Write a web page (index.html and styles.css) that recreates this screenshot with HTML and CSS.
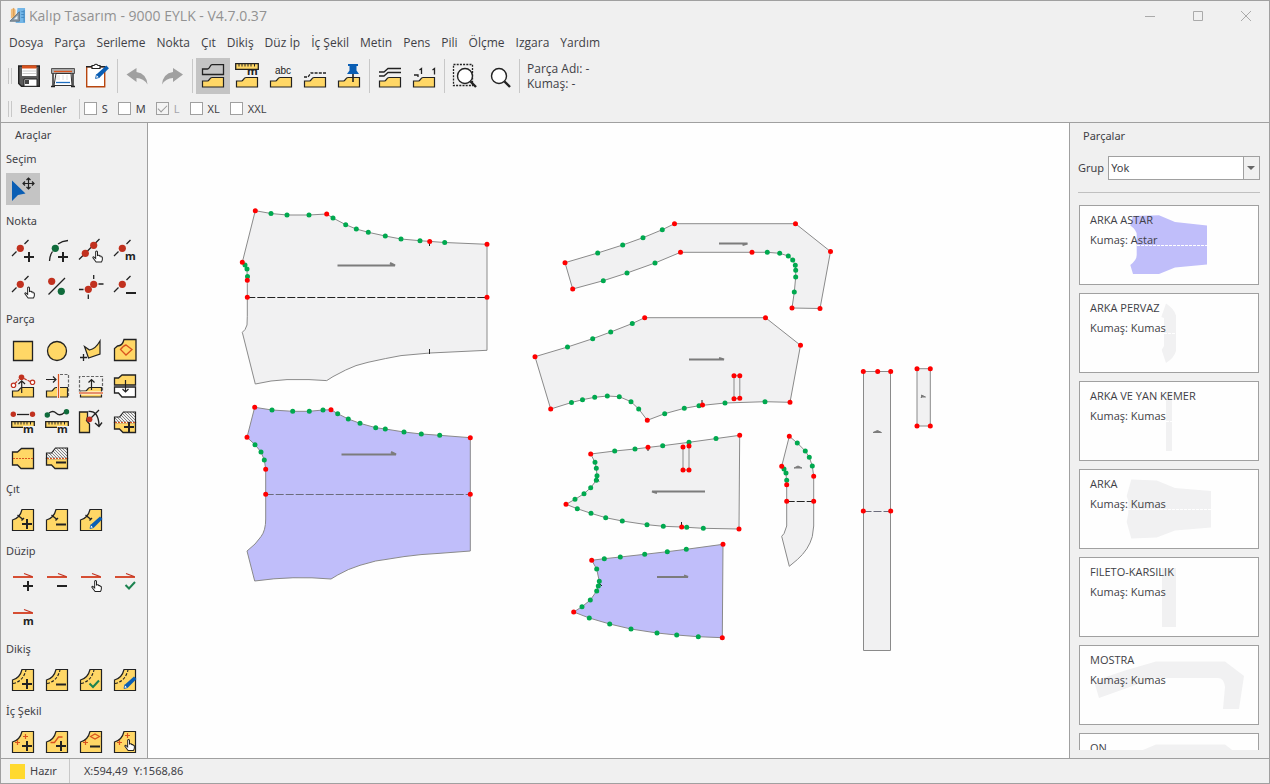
FILE: index.html
```html
<!DOCTYPE html>
<html lang="tr">
<head>
<meta charset="utf-8">
<title>Kalıp Tasarım - 9000 EYLK - V4.7.0.37</title>
<link rel="stylesheet" href="styles.css">
</head>
<body>
<svg class="defs" aria-hidden="true">
  <defs>
    <pattern id="hatch" width="3" height="3" patternUnits="userSpaceOnUse"><path d="M0 0L3 3" stroke="#777" stroke-width=".9"/></pattern>
    <symbol id="plus" viewBox="0 0 12 12"><path d="M1 6h10M6 1v10" stroke="#222" stroke-width="2"/></symbol>
    <symbol id="hand" viewBox="0 0 12 14"><path d="M4 9V2.200q0-1.200 1-1.200t1 1.200V6q2-.8 2.400.5Q10 6 10 7.400q1.300-.2 1.300 1V10q0 1.500-1 3H4.500L1 8.500q-.3-1.300 1-1.100z" fill="#fff" stroke="#222" stroke-width="1.100"/></symbol>
    <symbol id="linedot" viewBox="0 0 34 32"><path d="M6 21l4.500-4.500M18.500 9l4-4" stroke="#222" stroke-width="1.300"/><circle cx="14.300" cy="13.300" r="3.600" fill="#c1311f"/></symbol>
    <symbol id="ruler" viewBox="0 0 24 7"><path d="M.7.7h22.600v5.600H.7z" fill="#ffd766" stroke="#222" stroke-width="1.300"/><path d="M4 1v2.500M7 1v2.500M10 1v2.500M13 1v2.500M16 1v2.500M19.500 1v2.500" stroke="#222"/></symbol>
    <symbol id="half" viewBox="0 0 24 12"><path d="M1.500 11V5h5C8.500 5 8.500 1.500 11 1.500h11.500V11z" fill="#ffd766" stroke="#222" stroke-width="1.200"/></symbol>
    <symbol id="piece" viewBox="0 0 34 32"><path d="M6.500 27.500V17q7.500-2 9.500-10.500h11.500v21z" fill="#ffd766" stroke="#222" stroke-width="1.200"/></symbol>
    <symbol id="notch" viewBox="0 0 34 32"><use href="#piece"/><path d="M11.500 12l5.500 4.500M15.500 17.500l2.500-2.500" stroke="#222" stroke-width="1.400"/></symbol>
    <symbol id="seam" viewBox="0 0 34 32"><use href="#piece"/><path d="M7 20.500q10-2 13-13.500" fill="none" stroke="#222" stroke-width="1.100" stroke-dasharray="3 1.500"/></symbol>
    <symbol id="pencil" viewBox="0 0 14 14"><path d="M1 13l1-4 9-8 2.500 2.500L5 12z" fill="#0a5eb4"/><path d="M1 13l.8-3.600 2.800 2.700z" fill="#fff" stroke="#0a5eb4" stroke-width=".8"/></symbol>
    <symbol id="grain" viewBox="0 0 34 32"><path d="M7 12h20" stroke="#d33b1e" stroke-width="1.800"/><path d="M18 8.500l8 3" stroke="#c1311f" stroke-width="1.200"/></symbol>
    <symbol id="fold" viewBox="0 0 34 32"><path d="M6.500 17.500V12h5l4-5h12v10.500z" fill="url(#hatch)" stroke="#222" stroke-width="1.200"/><path d="M6.500 17.500V24h5l3.500 3.500h12.500v-10z" fill="#ffd766" stroke="#222" stroke-width="1.300"/><path d="M7 17.500h20" stroke="#fff" stroke-width="1.400"/><path d="M7 17.500h20" stroke="#d9531e" stroke-width="1.200" stroke-dasharray="2 1"/></symbol>
  </defs>
</svg>

<div class="window">
  <header class="titlebar">
    <svg class="logo" viewBox="0 0 18 18" aria-hidden="true"><path d="M9 1h8v16H7z" fill="#74b7e8"/><path d="M16 3v13M13 5h3M13 8h3M13 11h3" stroke="#3e83bd"/><path d="M2 3q2-3 5 0v9H2z" fill="#f2bd79"/><path d="M1 15l10-10v10z" fill="#8997a3" stroke="#617382"/><path d="M5 13l4-4v4z" fill="#e1edf6"/><path d="M5 1v9" stroke="#d89848"/></svg>
    <h1 class="title">Kalıp Tasarım - 9000 EYLK - V4.7.0.37</h1>
    <div class="controls">
      <button aria-label="Simge durumuna küçült"><svg viewBox="0 0 12 12"><path d="M1 6.500h10"/></svg></button>
      <button aria-label="Ekranı kapla"><svg viewBox="0 0 12 12"><path d="M1.500 1.500h9v9h-9z"/></svg></button>
      <button aria-label="Kapat"><svg viewBox="0 0 12 12"><path d="M1 1l10 10M11 1L1 11"/></svg></button>
    </div>
  </header>

  <nav class="menu">
    <a href="#">Dosya</a><a href="#">Parça</a><a href="#">Serileme</a><a href="#">Nokta</a><a href="#">Çıt</a><a href="#">Dikiş</a><a href="#">Düz İp</a><a href="#">İç Şekil</a><a href="#">Metin</a><a href="#">Pens</a><a href="#">Pili</a><a href="#">Ölçme</a><a href="#">Izgara</a><a href="#">Yardım</a>
  </nav>

  <div class="toolbar">
    <span class="grip"></span>
    <button class="tb" aria-label="Kaydet"><svg viewBox="0 0 34 36"><path d="M6.700 8h20.600v20.300H9.500l-2.800-2.800z" fill="#5b5b5b" stroke="#222" stroke-width="1.400"/><path d="M10 10h14.500v8H10z" fill="#fff"/><path d="M10 7.300h14.500v3.200H10z" fill="#d9531e"/><path d="M10.500 13h13.500M10.500 15.500h13.500" stroke="#ccc"/><path d="M12 21h13v7.300H12z" fill="#fff" stroke="#222"/><path d="M13 22h4v4h-4z" fill="#444"/></svg></button>
    <button class="tb" aria-label="Çizdir"><svg viewBox="0 0 34 36"><path d="M5.500 10.500h23v5h-23z" fill="#aaa" stroke="#555"/><path d="M8 13.500h18" stroke="#d9531e" stroke-width="1.300"/><path d="M7 15.500V28M27 15.500V28" stroke="#222" stroke-width="1.400"/><path d="M5 28.500h4M25 28.500h4" stroke="#222" stroke-width="1.400"/><path d="M10 15.500h15l1 12H8z" fill="#fff" stroke="#333"/><path d="M11 17v5M13 17v5M17 17v5M21 17v5" stroke="#ddd"/><path d="M10 24.500h14" stroke="#1f6fc0" stroke-width="1.300"/></svg></button>
    <button class="tb" aria-label="Düzenle"><svg viewBox="0 0 34 36"><path d="M6.700 8.700h18v20h-18z" fill="#fff" stroke="#b8460f" stroke-width="1.400"/><path d="M6 8.700h19.500" stroke="#222" stroke-width="1.400"/><path d="M12 7.500h2q2-2.500 4 0h2v3h-8z" fill="#fff" stroke="#222" stroke-width="1.200"/><use href="#pencil" x="14.500" y="6.500" width="15" height="15"/></svg></button>
    <span class="sep"></span>
    <button class="tb" aria-label="Geri al"><svg viewBox="0 0 34 36"><path d="M5.500 16.500l10-6.500v4q10 1.500 11 12.500-4-6.500-11-6.500v4z" fill="#a0a0a0"/></svg></button>
    <button class="tb" aria-label="Yinele"><svg viewBox="0 0 34 36"><path d="M28 16.500L18 10v4Q8 15.500 7 26.500 11 20 18 20v4z" fill="#a0a0a0"/></svg></button>
    <span class="sep"></span>
    <button class="tb on" aria-label="Parça" aria-pressed="true"><svg viewBox="0 0 34 36"><path d="M6.500 16.500V11h5c2.500 0 2-4 4.500-4.300h11.500v9.800z" fill="none" stroke="#222" stroke-width="1.300"/><use href="#half" x="5" y="18" width="24" height="12"/></svg></button>
    <button class="tb" aria-label="Ölçüler"><svg viewBox="0 0 34 36"><use href="#ruler" x="5" y="5" width="24" height="7"/><text x="17" y="17" class="glyph">m</text><use href="#half" x="5" y="18" width="24" height="12"/></svg></button>
    <button class="tb" aria-label="Metinler"><svg viewBox="0 0 34 36"><text x="11" y="16" class="abc">abc</text><use href="#half" x="5" y="18" width="24" height="12"/></svg></button>
    <button class="tb" aria-label="Dikiş payı"><svg viewBox="0 0 34 36"><path d="M6 19h4l3-4h15" fill="none" stroke="#222" stroke-width="1.300" stroke-dasharray="3 1.200"/><use href="#half" x="5" y="18" width="24" height="12"/></svg></button>
    <button class="tb" aria-label="Sabitle"><svg viewBox="0 0 34 36"><use href="#half" x="5" y="18" width="24" height="12"/><path d="M16 6h10v2h-1.500v4.500L27 16H15l2.500-3.500V8H16z" fill="#0a5eb4"/><path d="M21 16v8" stroke="#222" stroke-width="1.600"/></svg></button>
    <span class="sep"></span>
    <button class="tb" aria-label="Katmanlar"><svg viewBox="0 0 34 36"><path d="M6 14h5l4-3.500h13M6 18h5l4-3.500h13" fill="none" stroke="#222" stroke-width="1.300"/><use href="#half" x="5" y="18" width="24" height="12"/></svg></button>
    <button class="tb" aria-label="Çıtlar"><svg viewBox="0 0 34 36"><path d="M12.500 12l2-1.500v5.500M25.500 12l2-1.500v6M7 17h4v2" fill="none" stroke="#222" stroke-width="1.300"/><use href="#half" x="5" y="18" width="24" height="12"/></svg></button>
    <span class="sep"></span>
    <button class="tb" aria-label="Alanı yakınlaştır"><svg viewBox="0 0 34 36"><path d="M5.500 6.500h19v21h-19z" fill="none" stroke="#222" stroke-width="1.300" stroke-dasharray="2 1.200"/><circle cx="17" cy="18" r="7.500" fill="#fff" stroke="#222" stroke-width="1.400"/><path d="M22.500 23.500l5.500 5.500" stroke="#222" stroke-width="2.400"/></svg></button>
    <button class="tb" aria-label="Yakınlaştır"><svg viewBox="0 0 34 36"><circle cx="17" cy="18" r="7.500" fill="#fff" stroke="#222" stroke-width="1.400"/><path d="M22.500 23.500l5.500 5.500" stroke="#222" stroke-width="2.400"/></svg></button>
    <span class="sep"></span>
    <p class="pieceinfo">Parça Adı: -<br>Kumaş: -</p>
  </div>

  <div class="sizes">
    <span class="grip"></span>
    <span class="sizes-title">Bedenler</span>
    <span class="sep"></span>
    <label><input type="checkbox">S</label>
    <label><input type="checkbox">M</label>
    <label class="disabled"><input type="checkbox" checked disabled>L</label>
    <label><input type="checkbox">XL</label>
    <label><input type="checkbox">XXL</label>
  </div>

  <div class="work">
    <aside class="tools">
      <h2 class="panel-title">Araçlar</h2>
      <section><h3>Seçim</h3><div class="grid">
        <button class="on" aria-label="Seç" aria-pressed="true"><svg viewBox="0 0 34 32"><path d="M6 7.500l13.500 13L12 22l-6 6z" fill="#0a5eb4"/><path d="M17 10.500h11M22.500 5v11M19 8.500l-2 2 2 2M26 8.500l2 2-2 2M20.500 7l2-2 2 2M20.500 14l2 2 2-2" fill="none" stroke="#222" stroke-width="1.200"/></svg></button>
      </div></section>
      <section><h3>Nokta</h3><div class="grid">
        <button aria-label="Nokta ekle"><svg viewBox="0 0 34 32"><use href="#linedot"/><use href="#plus" x="17" y="16" width="12" height="12"/></svg></button>
        <button aria-label="Eğri noktası ekle"><svg viewBox="0 0 34 32"><path d="M9.500 26q0-5 3-9.500M18 9q4-3 10-3.500" fill="none" stroke="#222" stroke-width="1.300"/><circle cx="15.300" cy="13.300" r="3.600" fill="#0f6b3b"/><use href="#plus" x="17" y="16" width="12" height="12"/></svg></button>
        <button aria-label="Noktaları taşı"><svg viewBox="0 0 34 32"><path d="M5 24.500L25.500 4" stroke="#222" stroke-width="1.300"/><g fill="#c1311f"><circle cx="11.300" cy="18.300" r="3.600"/><circle cx="19.700" cy="10.300" r="3.600"/></g><use href="#hand" x="18" y="15" width="11" height="13"/></svg></button>
        <button aria-label="Nokta ölçüsü"><svg viewBox="0 0 34 32"><use href="#linedot"/><text x="17" y="25" class="glyph">m</text></svg></button>
        <button aria-label="Nokta taşı"><svg viewBox="0 0 34 32"><use href="#linedot"/><use href="#hand" x="18" y="15" width="11" height="13"/></svg></button>
        <button aria-label="Nokta türü"><svg viewBox="0 0 34 32"><path d="M8.500 23.500L25 7" stroke="#222" stroke-width="1.300"/><circle cx="11.700" cy="10.300" r="3.600" fill="#c1311f"/><circle cx="21.300" cy="20.300" r="3.600" fill="#0f6b3b"/></svg></button>
        <button aria-label="Hizala"><svg viewBox="0 0 34 32"><path d="M19.700 4v4M24.500 13h5M5 18.500h4.500M14.300 23.500V28" stroke="#222" stroke-width="1.300"/><g fill="#c1311f"><circle cx="14.300" cy="18.300" r="3.600"/><circle cx="19.700" cy="13.300" r="3.600"/></g></svg></button>
        <button aria-label="Nokta sil"><svg viewBox="0 0 34 32"><use href="#linedot"/><path d="M18 22h10" stroke="#222" stroke-width="2"/></svg></button>
      </div></section>
      <section><h3>Parça</h3><div class="grid">
        <button aria-label="Dikdörtgen"><svg viewBox="0 0 34 32"><path d="M7.500 8.500h19v19h-19z" fill="#ffd766" stroke="#222" stroke-width="1.300"/></svg></button>
        <button aria-label="Daire"><svg viewBox="0 0 34 32"><circle cx="17" cy="18" r="9.500" fill="#ffd766" stroke="#222" stroke-width="1.300"/></svg></button>
        <button aria-label="Serbest parça"><svg viewBox="0 0 34 32"><path d="M10.500 13.500l5 3.500q6-1 10.500-9v13l-11.500 4z" fill="#ffd766" stroke="#222" stroke-width="1.200"/><path d="M6 24.500h7M9.500 21v7" stroke="#222" stroke-width="1.300"/></svg></button>
        <button aria-label="İçten parça"><svg viewBox="0 0 34 32"><path d="M6.500 27.500v-12l3-2.500q5 0 6.500-6.500h12v21z" fill="#ffd766" stroke="#222" stroke-width="1.300"/><path d="M12.500 16.500q3-4 5.500-4.500l6 4.500-6 5.500z" fill="none" stroke="#d9531e" stroke-width="1.300"/></svg></button>
        <button aria-label="Parça kopar"><svg viewBox="0 0 34 32"><use href="#half" x="5" y="17" width="24" height="12"/><path d="M9 14.500l4-4M18 9.500l6 3" stroke="#c1311f" stroke-width="1.200" stroke-dasharray="3 1"/><path d="M15.700 24V12M12.500 15l3.200-3.200L19 15" fill="none" stroke="#222" stroke-width="1.200"/><circle cx="15.500" cy="8.300" r="2.800" fill="#c1311f"/><g fill="#fff" stroke="#c1311f" stroke-width="1.200"><circle cx="7.500" cy="16.300" r="2.200"/><circle cx="26.500" cy="13.300" r="2.200"/></g></svg></button>
        <button aria-label="Böl"><svg viewBox="0 0 34 32"><use href="#half" x="5" y="17" width="24" height="12"/><path d="M20 5.500h8.500V28" fill="none" stroke="#666" stroke-width="1.200" stroke-dasharray="3 1.500"/><path d="M6 10.500h10M13 7.500l3 3-3 3" fill="none" stroke="#222" stroke-width="1.200"/><path d="M18.500 5v24" stroke="#fff" stroke-width="3"/><path d="M18.500 5v24" stroke="#d9531e" stroke-width="1.400"/></svg></button>
        <button aria-label="Uzat"><svg viewBox="0 0 34 32"><use href="#half" x="5" y="17" width="24" height="12"/><path d="M5.500 23V7.500h23V23" fill="none" stroke="#666" stroke-width="1.200" stroke-dasharray="3 1.500"/><path d="M5 24h24" stroke="#fff" stroke-width="3"/><path d="M5 24h24" stroke="#d9531e" stroke-width="1.300"/><path d="M17.500 21V10.500M14.500 13.500l3-3 3 3" fill="none" stroke="#222" stroke-width="1.200"/></svg></button>
        <button aria-label="Ayır"><svg viewBox="0 0 34 32"><path d="M6.500 16V9h4l3.500-3h13.500v10z" fill="#ffd766" stroke="#222" stroke-width="1.300"/><path d="M6.500 18h21v10H14l-3.500-4h-4z" fill="#fff" stroke="#222" stroke-width="1.300"/><path d="M17.500 11v12M14.500 20l3 3 3-3" fill="none" stroke="#222" stroke-width="1.200"/></svg></button>
        <button aria-label="Düz ölçü"><svg viewBox="0 0 34 32"><path d="M11 9.500h12" stroke="#222" stroke-width="1.300"/><g fill="#c1311f"><circle cx="7.300" cy="9.300" r="2.700"/><circle cx="26.500" cy="9.300" r="2.700"/></g><use href="#ruler" x="5" y="16" width="24" height="7"/><path d="M17 21h12v7H17z" fill="#f0f0f0"/><text x="17" y="28" class="glyph">m</text></svg></button>
        <button aria-label="Eğri ölçü"><svg viewBox="0 0 34 32"><path d="M9 8q4-3 7 0 4 4 9-1" fill="none" stroke="#222" stroke-width="1.300"/><g fill="#0f6b3b"><circle cx="7.300" cy="10" r="2.700"/><circle cx="26.500" cy="6.700" r="2.700"/></g><use href="#ruler" x="5" y="16" width="24" height="7"/><path d="M17 21h12v7H17z" fill="#f0f0f0"/><text x="17" y="28" class="glyph">m</text></svg></button>
        <button aria-label="Döndür"><svg viewBox="0 0 34 32"><path d="M5.500 7h8v4.500l-1 4 3 3.500v8.500h-10z" fill="#ffd766" stroke="#222" stroke-width="1.300"/><path d="M16 14l9-9M14.500 6.500q10-1 10.500 14M21 18l4 3.500 3-4" fill="none" stroke="#222" stroke-width="1.300"/><circle cx="15.500" cy="14.300" r="2.900" fill="#c1311f"/></svg></button>
        <button aria-label="Kat ekle"><svg viewBox="0 0 34 32"><use href="#fold"/><use href="#plus" x="15" y="16" width="12" height="12"/></svg></button>
        <button aria-label="Katı aç"><svg viewBox="0 0 34 32"><path d="M6.500 24V11h5l4-3.500h12v20H15L11.500 24z" fill="#ffd766" stroke="#222" stroke-width="1.300"/><path d="M7 17.500h20" stroke="#d9531e" stroke-width="1.200" stroke-dasharray="2 1"/></svg></button>
        <button aria-label="Kat sil"><svg viewBox="0 0 34 32"><use href="#fold"/><path d="M16 21.500h10" stroke="#222" stroke-width="2"/></svg></button>
      </div></section>
      <section><h3>Çıt</h3><div class="grid">
        <button aria-label="Çıt ekle"><svg viewBox="0 0 34 32"><use href="#notch"/><use href="#plus" x="15" y="15" width="12" height="12"/></svg></button>
        <button aria-label="Çıt sil"><svg viewBox="0 0 34 32"><use href="#notch"/><path d="M16 21.500h10" stroke="#222" stroke-width="2"/></svg></button>
        <button aria-label="Çıt düzenle"><svg viewBox="0 0 34 32"><use href="#notch"/><use href="#pencil" x="15" y="12.500" width="14" height="14"/></svg></button>
      </div></section>
      <section><h3>Düzip</h3><div class="grid">
        <button aria-label="Düz ip ekle"><svg viewBox="0 0 34 32"><use href="#grain"/><use href="#plus" x="16" y="15" width="12" height="12"/></svg></button>
        <button aria-label="Düz ip sil"><svg viewBox="0 0 34 32"><use href="#grain"/><path d="M17 21h10" stroke="#222" stroke-width="2"/></svg></button>
        <button aria-label="Düz ip taşı"><svg viewBox="0 0 34 32"><use href="#grain"/><use href="#hand" x="17" y="14.500" width="11" height="13"/></svg></button>
        <button aria-label="Düz ip onayla"><svg viewBox="0 0 34 32"><use href="#grain"/><path d="M17.500 20l3.500 3.500 6-6.500" fill="none" stroke="#1c8350" stroke-width="2"/></svg></button>
        <button aria-label="Düz ip ölçüsü"><svg viewBox="0 0 34 32"><use href="#grain"/><text x="17" y="24" class="glyph">m</text></svg></button>
      </div></section>
      <section><h3>Dikiş</h3><div class="grid">
        <button aria-label="Dikiş ekle"><svg viewBox="0 0 34 32"><use href="#seam"/><use href="#plus" x="15" y="15" width="12" height="12"/></svg></button>
        <button aria-label="Dikiş sil"><svg viewBox="0 0 34 32"><use href="#seam"/><path d="M16 21.500h10" stroke="#222" stroke-width="2"/></svg></button>
        <button aria-label="Dikiş onayla"><svg viewBox="0 0 34 32"><use href="#seam"/><path d="M15.500 20.500l3.500 3.500 6-6.500" fill="none" stroke="#1c8350" stroke-width="2"/></svg></button>
        <button aria-label="Dikiş düzenle"><svg viewBox="0 0 34 32"><use href="#seam"/><use href="#pencil" x="15" y="12.500" width="14" height="14"/></svg></button>
      </div></section>
      <section><h3>İç Şekil</h3><div class="grid">
        <button aria-label="İç nokta ekle"><svg viewBox="0 0 34 32"><use href="#piece"/><path d="M9 17.500h5M11.500 15v5M17 11.500h5M19.500 9v5" stroke="#d9531e" stroke-width="1.200"/><use href="#plus" x="15" y="15" width="12" height="12"/></svg></button>
        <button aria-label="İç çizgi ekle"><svg viewBox="0 0 34 32"><use href="#piece"/><path d="M10.500 17.500h4l4-5.500h4" fill="none" stroke="#d9531e" stroke-width="1.300"/><use href="#plus" x="15" y="15" width="12" height="12"/></svg></button>
        <button aria-label="İç şekil sil"><svg viewBox="0 0 34 32"><use href="#piece"/><path d="M9 17.500h5M11.500 15v5M16.500 11.500l4.500-2.500 4.500 2.500-4.500 2.500z" fill="none" stroke="#d9531e" stroke-width="1.200"/><path d="M16 21.500h10" stroke="#222" stroke-width="2"/></svg></button>
        <button aria-label="İç şekil taşı"><svg viewBox="0 0 34 32"><use href="#piece"/><path d="M9 17.500h5M11.500 15v5M17 10.500h5M19.500 8v5" stroke="#d9531e" stroke-width="1.200"/><use href="#hand" x="16" y="13.500" width="11" height="13"/></svg></button>
      </div></section>
    </aside>

    <main class="canvas">
      <svg class="drawing" viewBox="148 123 921 635" preserveAspectRatio="xMinYMin meet" role="img" aria-label="Kalıp parçaları">
        <g class="outline">
          <path d="M255.300 210.700L271 213.500 287 215h22l17.700-1 6.300 4 12.700 6.700 10.600 4.300 12 3.300 17 3.700 15.700 3 19 1.700 24.700 1.800 42.300 1.800v106L430 353l-29 2.600-15.700 3-17.300 3.700-12 3.300-10.300 4.400-12.700 6.600-6.300 4-17.700-1H287l-16 1.400-15.700 3-13-51.700 2.700-2.700 2-4.600.3-8.700v-33L247 269l-2-4-2.700-2.700z"/>
          <path class="lining" d="M254.700 407.300l17.300 2.700 20.700 1.300h16.600L323 410l8-.3 6.700 4 10.600 5.300 11.700 4.300 15.700 4.400 9.600 1.300 18.700 3 17.300 2 18.400 1.300 30.600 2.400V551L440 553.300l-19 1.300-17 2-19 3-9.300 1.400-15.700 4.300-11.700 4.300L337.700 575l-6.700 4q-38-3.500-76.300 2l-7.700-30 8-7 6-7.400q4.700-6 4.700-17.600v-50l-1.400-9-3.300-8-6-7.300-8-7.400z"/>
          <path d="M565 262.700l32.700-9.700 25-8 20.300-7.300 19.300-8 12.200-6h121l35 27.800-10.500 57-28-.5 2.300-16 1.400-15v-6.700l-.4-5-2.600-5.300-4.400-4-8.600-2.700-12.400-1H680.500L655 263l-28 10-23.700 7.700-30.600 8.300z"/>
          <path d="M535 356.700l32.500-9.700 25.200-8.300 18-6.700 21.600-8.500 12.400-5.800h120.800l35 27.600-10.500 57-25-.6-40 1.300-26 2.700-14.700 2.600-19.600 5.400-17.400 6.600-8.600-11.300-7.700-7.300-11.700-5-12-.7-12.600 1.300-12.200 2.400-11 2.800-20.800 6.500z"/>
          <path d="M590.700 454l24-3 20.300-2 27.700-3.300 26.300-3.400 50.700-7L739 529l-35.700-.7-21.600-1.300-18.400-.7-16.300-1.600-24.700-3.700-16.600-3.300-14.700-4.400-13.700-4.600-11.300-4.400 9-5 9-5.600 6.700-6 5.600-7.400.7-4.600-.7-7.400-1.300-6z"/>
          <path class="lining" d="M591.700 560.300l12.600-1.600 16-1.700 24.400-2.700 22.600-2.600 19-2.400 36.700-5-.7 93.400-24-1-21.600-1.700-19.700-2-26-4-21.300-5-20.400-6-15.600-6 8.300-5.300 8.300-6.700 6.400-9 1.600-5 1-4.700-2.600-12.300z"/>
          <path d="M789.300 436.300l8 6.700 8 8 4 6.300 3 8.700 1.400 10.300V526l-1.400 10.600q-3.600 13-15 23l-8 6.700-7.600-30 2.300-2.700 2.700-7.600v-41.300l-.7-11.700-2-4-2.300-2.700z"/>
          <path d="M863.500 371.500h27v279h-27zM917 368.700h13.300V426H917z"/>
          <path d="M734 375.700h5.800v22.600l-5.800.4zM683 447v23h6v-24"/>
        </g>
        <path class="dash" d="M247.300 297.500H487M786.700 501.500h27"/>
        <path class="dash soft" d="M265.700 494.500h204.600M863.500 511.500h27"/>
        <path class="tick" d="M429.500 241v5M429.500 349v5M702 400v6M681.500 522v5M648 447v4M597 478l2 3.500M599 583l3 3"/>
        <path class="arrow" d="M337.500 265.500H395l-5-2.500M341.500 454.500H396l-5-2.500M719 243.500h28.500l-5 1.500M689 359.500h35l-5-1.500M705 491.500h-53l5 1.500M657 577h31l-4-1.500"/>
        <path class="arrow small" d="M873 432.500h8.500l-4-2zM921 397h4.500l-4-2v3zM794 468h8l-4-2z"/>
        <path class="dots curve" d="M271 213.500h0M287 215h0M309 215h0M333 218h0M345.700 224.700h0M356.300 229h0M368.300 232.300h0M385.300 236h0M401 239h0M420 240.700h0M444.700 242.500h0M245 265h0M247 269h0M247.500 276.500h0
          M272 410h0M292.700 411.300h0M309.300 411.300h0M323 410h0M337.700 413.700h0M348.300 419h0M360 423.300h0M375.700 427.700h0M385.300 429h0M404 432h0M421.300 434h0M439.700 435.300h0M255 444.700h0M261 452h0M264.300 460h0
          M597.700 253h0M622.700 245h0M643 237.700h0M662.300 229.700h0M767.300 252.300h0M779.700 253.300h0M788.300 256h0M792.700 260h0M795.300 265.300h0M795.700 270.300h0M795.700 277h0M794.300 292h0M603.300 280.700h0M627 273h0M655 263h0
          M567.500 347h0M592.700 338.700h0M610.700 332h0M632.300 323.500h0M765 401.700h0M725 403h0M699 405.700h0M684.300 408.300h0M664.700 413.700h0M638.700 409h0M631 401.700h0M619.300 396.700h0M607.300 396h0M594.700 397.300h0M582.500 399.700h0M571.500 402.500h0
          M614.700 451h0M635 449h0M662.700 445.700h0M689 442.300h0M716 438.500h0M595 462.300h0M596.300 468.300h0M597 475.700h0M596.300 480.300h0M590.700 487.700h0M584 493.700h0M575 499.300h0M577.300 508.700h0M591 513.300h0M605.700 517.700h0M622.300 521h0M647 524.700h0M663.300 526.300h0M686.700 527.300h0M703.300 528.300h0
          M604.300 558.700h0M620.300 557h0M644.700 554.300h0M667.300 551.700h0M686.300 549.300h0M596.700 569h0M599.300 581.300h0M598.300 586h0M596.700 591h0M590.300 600h0M582 606.700h0M589.300 618h0M609.700 624h0M631 629h0M657 633h0M676.700 635h0M698.300 636.700h0
          M797.300 443h0M805.300 451h0M809.300 457.300h0M812.300 466h0M784 469h0M786 473h0M786.700 480.300h0"/>
        <path class="dots corner" d="M255.300 210.700h0M326.700 214h0M429.700 241.500h0M487 244.300h0M487 297.300h0M247.300 297.300h0M247.300 280.300h0M242.300 262.300h0
          M254.700 407.300h0M331 409.700h0M470.300 437.700h0M470.300 494.300h0M265.700 494.300h0M265.700 469.300h0M247 437.300h0
          M565 262.700h0M674.500 223.700h0M795.500 223.700h0M830.500 251.500h0M820 308.500h0M792 308h0M752 252.300h0M680.500 252.300h0M572.700 289h0
          M535 356.700h0M644.700 317.700h0M765.500 317.700h0M800.500 345.300h0M790 402.300h0M702.500 405h0M647.300 420.300h0M550.700 409h0M734 375.700h0M739.800 375.700h0M734 398.700h0M739.800 398.300h0
          M590.700 454h0M648 447.300h0M739.700 435.300h0M739 529h0M681.700 527h0M566 504.300h0M683 447h0M689 446h0M683 470h0M689 470h0
          M591.700 560.300h0M723 544.300h0M722.300 637.700h0M573.700 612h0
          M789.300 436.300h0M813.700 476.300h0M813.700 501.300h0M786.700 501.300h0M786.700 484.700h0M781.700 466.300h0
          M863.300 371.500h0M877.700 371.500h0M890.700 371.500h0M863.300 511h0M890.700 511h0M917 368.700h0M930.300 368.700h0M917 426h0M930.300 426h0"/>
      </svg>
    </main>

    <aside class="pieces">
      <h2 class="panel-title">Parçalar</h2>
      <div class="group-row"><label for="group">Grup</label>
        <span class="selectwrap"><select id="group"><option>Yok</option></select></span></div>
      <hr>
      <ul class="cards">
        <li><svg viewBox="1 1 178 78"><path class="lining" d="M54 11l26-.7 16 6.700 32 3.500v39l-32 3L80 69H54l-2.700-9q6.400-5 6.400-10V30q0-5-6.400-9.500z"/><path class="mid" d="M58 40.500h70"/></svg><h4>ARKA ASTAR</h4><p>Kumaş: Astar</p></li>
        <li><svg viewBox="1 1 178 78"><path d="M87 10.500q8 5 10 12V58q-2 7-10 12l-4.300-13 2.300-4V25l-2.700-1z"/><path class="mid" d="M85 40.500h12"/></svg><h4>ARKA PERVAZ</h4><p>Kumaş: Kumas</p></li>
        <li><svg viewBox="1 1 178 78"><path d="M87 11h6v59h-6z"/><path class="mid" d="M87 40.500h6"/></svg><h4>ARKA VE YAN KEMER</h4><p>Kumaş: Kumas</p></li>
        <li><svg viewBox="1 1 178 78"><path d="M52.300 10.600l25.400.8L96 19l36 3v36.500l-36 3-18.300 7-25.400 1L47.700 53l1.600-8.500V32l-1.600-5z"/><path class="mid" d="M49 40.500h83"/></svg><h4>ARKA</h4><p>Kumaş: Kumas</p></li>
        <li><svg viewBox="1 1 178 78"><path d="M83 11h14v59H83z"/></svg><h4>FILETO-KARSILIK</h4><p>Kumaş: Kumas</p></li>
        <li><svg viewBox="1 1 178 78"><path d="M15 36l31-10.500 31-9h69L165 31l-5 33h-16l2-22q-1-9-7-9H76L20 53z"/></svg><h4>MOSTRA</h4><p>Kumaş: Kumas</p></li>
        <li><svg viewBox="1 1 178 78"><path d="M40 27l37-15.500h69L165 26v40H40z"/></svg><h4>ON</h4></li>
      </ul>
    </aside>
  </div>

  <footer class="status">
    <span class="lamp"></span><span class="state">Hazır</span><span class="coords">X:594,49&nbsp; Y:1568,86</span>
  </footer>
</div>
</body>
</html>
```
FILE: styles.css
```css
* { box-sizing: border-box; }
body, h1, h2, h3, h4, p, ul { margin: 0; padding: 0; font-weight: normal; }
body {
  font: 11px/16px "Noto Sans", "Open Sans", sans-serif;
  color: #3f3f46;
  background: #f0f0f0;
}
button { border: 0; padding: 0; background: none; display: block; font: inherit; }
ul { list-style: none; }
.defs { position: absolute; width: 0; height: 0; }

.window {
  height: 100vh;
  display: flex;
  flex-direction: column;
  border: 1px solid #a0a0a0;
  overflow: hidden;
}

.titlebar { display: flex; align-items: center; flex: none; height: 29px; padding-left: 8px; }
.logo { width: 17px; height: 17px; margin-right: 3px; }
.title { flex: 1; font: 14px/20px "Open Sans", "Noto Sans", sans-serif; color: #929292; }
.controls { display: flex; margin-right: -1px; }
.controls button { width: 48px; height: 28px; display: grid; place-items: center; }
.controls svg { width: 12px; height: 12px; fill: none; stroke: #aaa; }

.menu { display: flex; flex: none; gap: 11px; height: 28px; align-items: center; padding: 0 0 2px 8px; font: 12px/16px "Open Sans", "Noto Sans", sans-serif; }
.menu a { color: inherit; text-decoration: none; white-space: nowrap; }

.toolbar { display: flex; flex: none; height: 36px; align-items: center; padding-left: 7px; }
.grip { flex: none; width: 4px; height: 16px; border: solid #c8c8c8; border-width: 0 1px; }
.tb { flex: none; width: 34px; height: 36px; }
.tb svg { display: block; width: 34px; height: 36px; }
.on { background: #c4c4c4; }
.sep { flex: none; width: 1px; height: 34px; margin: 0 3px; background: #c8c8c8; }
.pieceinfo { padding-left: 4px; font: 12px/15px "Open Sans", "Noto Sans", sans-serif; white-space: nowrap; }
.glyph { font: bold 11px "Noto Sans", sans-serif; fill: #222; }
.abc { font: 10px "Liberation Sans", sans-serif; fill: #222; }

.sizes { display: flex; flex: none; height: 28px; align-items: center; padding: 1px 0 0 7px; }
.sizes-title { margin: 0 9px 0 8px; }
.sizes .sep { height: 20px; margin: 0 4px 0 3px; }
.sizes label { display: flex; align-items: center; gap: 5px; margin-right: 10px; }
.sizes input {
  appearance: none;
  display: grid;
  place-items: center;
  width: 13px;
  height: 13px;
  margin: 0;
  border: 1px solid #a0a0a0;
  background: #fff;
}
.sizes input:checked { background: #f4f4f4; }
.sizes input:checked::after {
  content: "";
  width: 8px;
  height: 4px;
  margin-bottom: 2px;
  border: solid #999;
  border-width: 0 0 1px 1px;
  transform: rotate(-45deg);
}
.disabled { color: #a5a5ad; }

.work {
  flex: 1;
  min-height: 0;
  display: grid;
  grid-template-columns: 147px 1fr 200px;
  border-top: 1px solid #a0a0a0;
  border-bottom: 1px solid #a0a0a0;
}
.tools { border-right: 1px solid #a0a0a0; overflow: hidden; padding-left: 5px; }
.panel-title { font-size: 11px; line-height: 23px; padding-left: 9px; }
.tools section { padding-bottom: 3px; }
.tools h3 { font-size: 11px; line-height: 26px; margin-bottom: 1px; }
.grid { display: grid; grid-template-columns: repeat(4, 34px); row-gap: 4px; }
.grid svg { display: block; width: 34px; height: 32px; }

.canvas { background: #fefefe; overflow: hidden; }
.drawing { display: block; width: 100%; height: 100%; }
.outline path { fill: #f1f1f2; stroke: #8a8a8a; }
.outline .lining { fill: #c0befa; }
.dash, .tick { fill: none; stroke: #222; stroke-dasharray: 8 2; }
.dash.soft { stroke: #6c6c7c; }
.arrow { fill: none; stroke: #7c7c7c; stroke-width: 2; }
.arrow.small { stroke-width: 1; fill: #7c7c7c; }
.dots { fill: none; stroke-width: 5; stroke-linecap: round; }
.curve { stroke: #00a94f; }
.corner { stroke: #f00; }

.pieces {
  border-left: 1px solid #a0a0a0;
  padding: 0 9px 8px 8px;
  display: flex;
  flex-direction: column;
  min-height: 0;
}
.pieces .panel-title { padding-left: 5px; line-height: 25px; }
.group-row { display: flex; align-items: center; gap: 4px; margin-top: 8px; }
.selectwrap { flex: 1; position: relative; display: flex; }
.selectwrap::after {
  content: "";
  position: absolute;
  right: 5px;
  top: 10px;
  border: solid transparent;
  border-width: 4px 4px 0;
  border-top-color: #666;
}
.selectwrap::before {
  content: "";
  position: absolute;
  right: 16px;
  top: 0;
  bottom: 0;
  width: 1px;
  background: #a0a0a0;
}
select {
  appearance: none;
  width: 100%;
  height: 24px;
  padding: 0 2px;
  border: 1px solid #a0a0a0;
  border-radius: 0;
  background: linear-gradient(to left, #f0f0f0 16px, #fff 16px);
  color: inherit;
  font: inherit;
}
hr { width: 100%; margin: 12px 0; border: 0; border-top: 1px solid #c0c0c0; }
.cards { flex: 1; min-height: 0; overflow: hidden; padding-left: 1px; }
.cards li { position: relative; height: 80px; margin: 0 1px 8px 0; padding: 4px 10px; border: 1px solid #a0a0a0; background: #fefefe; }
.cards svg { position: absolute; inset: 0; width: 100%; height: 100%; fill: #f1f1f2; }
.cards .lining { fill: #c0befa; }
.cards .mid { stroke: #fff; stroke-dasharray: 3 1; }
.cards h4, .cards p { position: relative; font: 11px/20px "Open Sans", "Noto Sans", sans-serif; }

.status { display: flex; flex: none; height: 24px; align-items: center; padding-left: 9px; }
.lamp { width: 15px; height: 15px; background: #ffd92e; }
.state { margin: 0 12px 0 5px; }
.coords { align-self: stretch; padding-left: 14px; line-height: 24px; border-left: 1px solid #c8c8c8; }
```
